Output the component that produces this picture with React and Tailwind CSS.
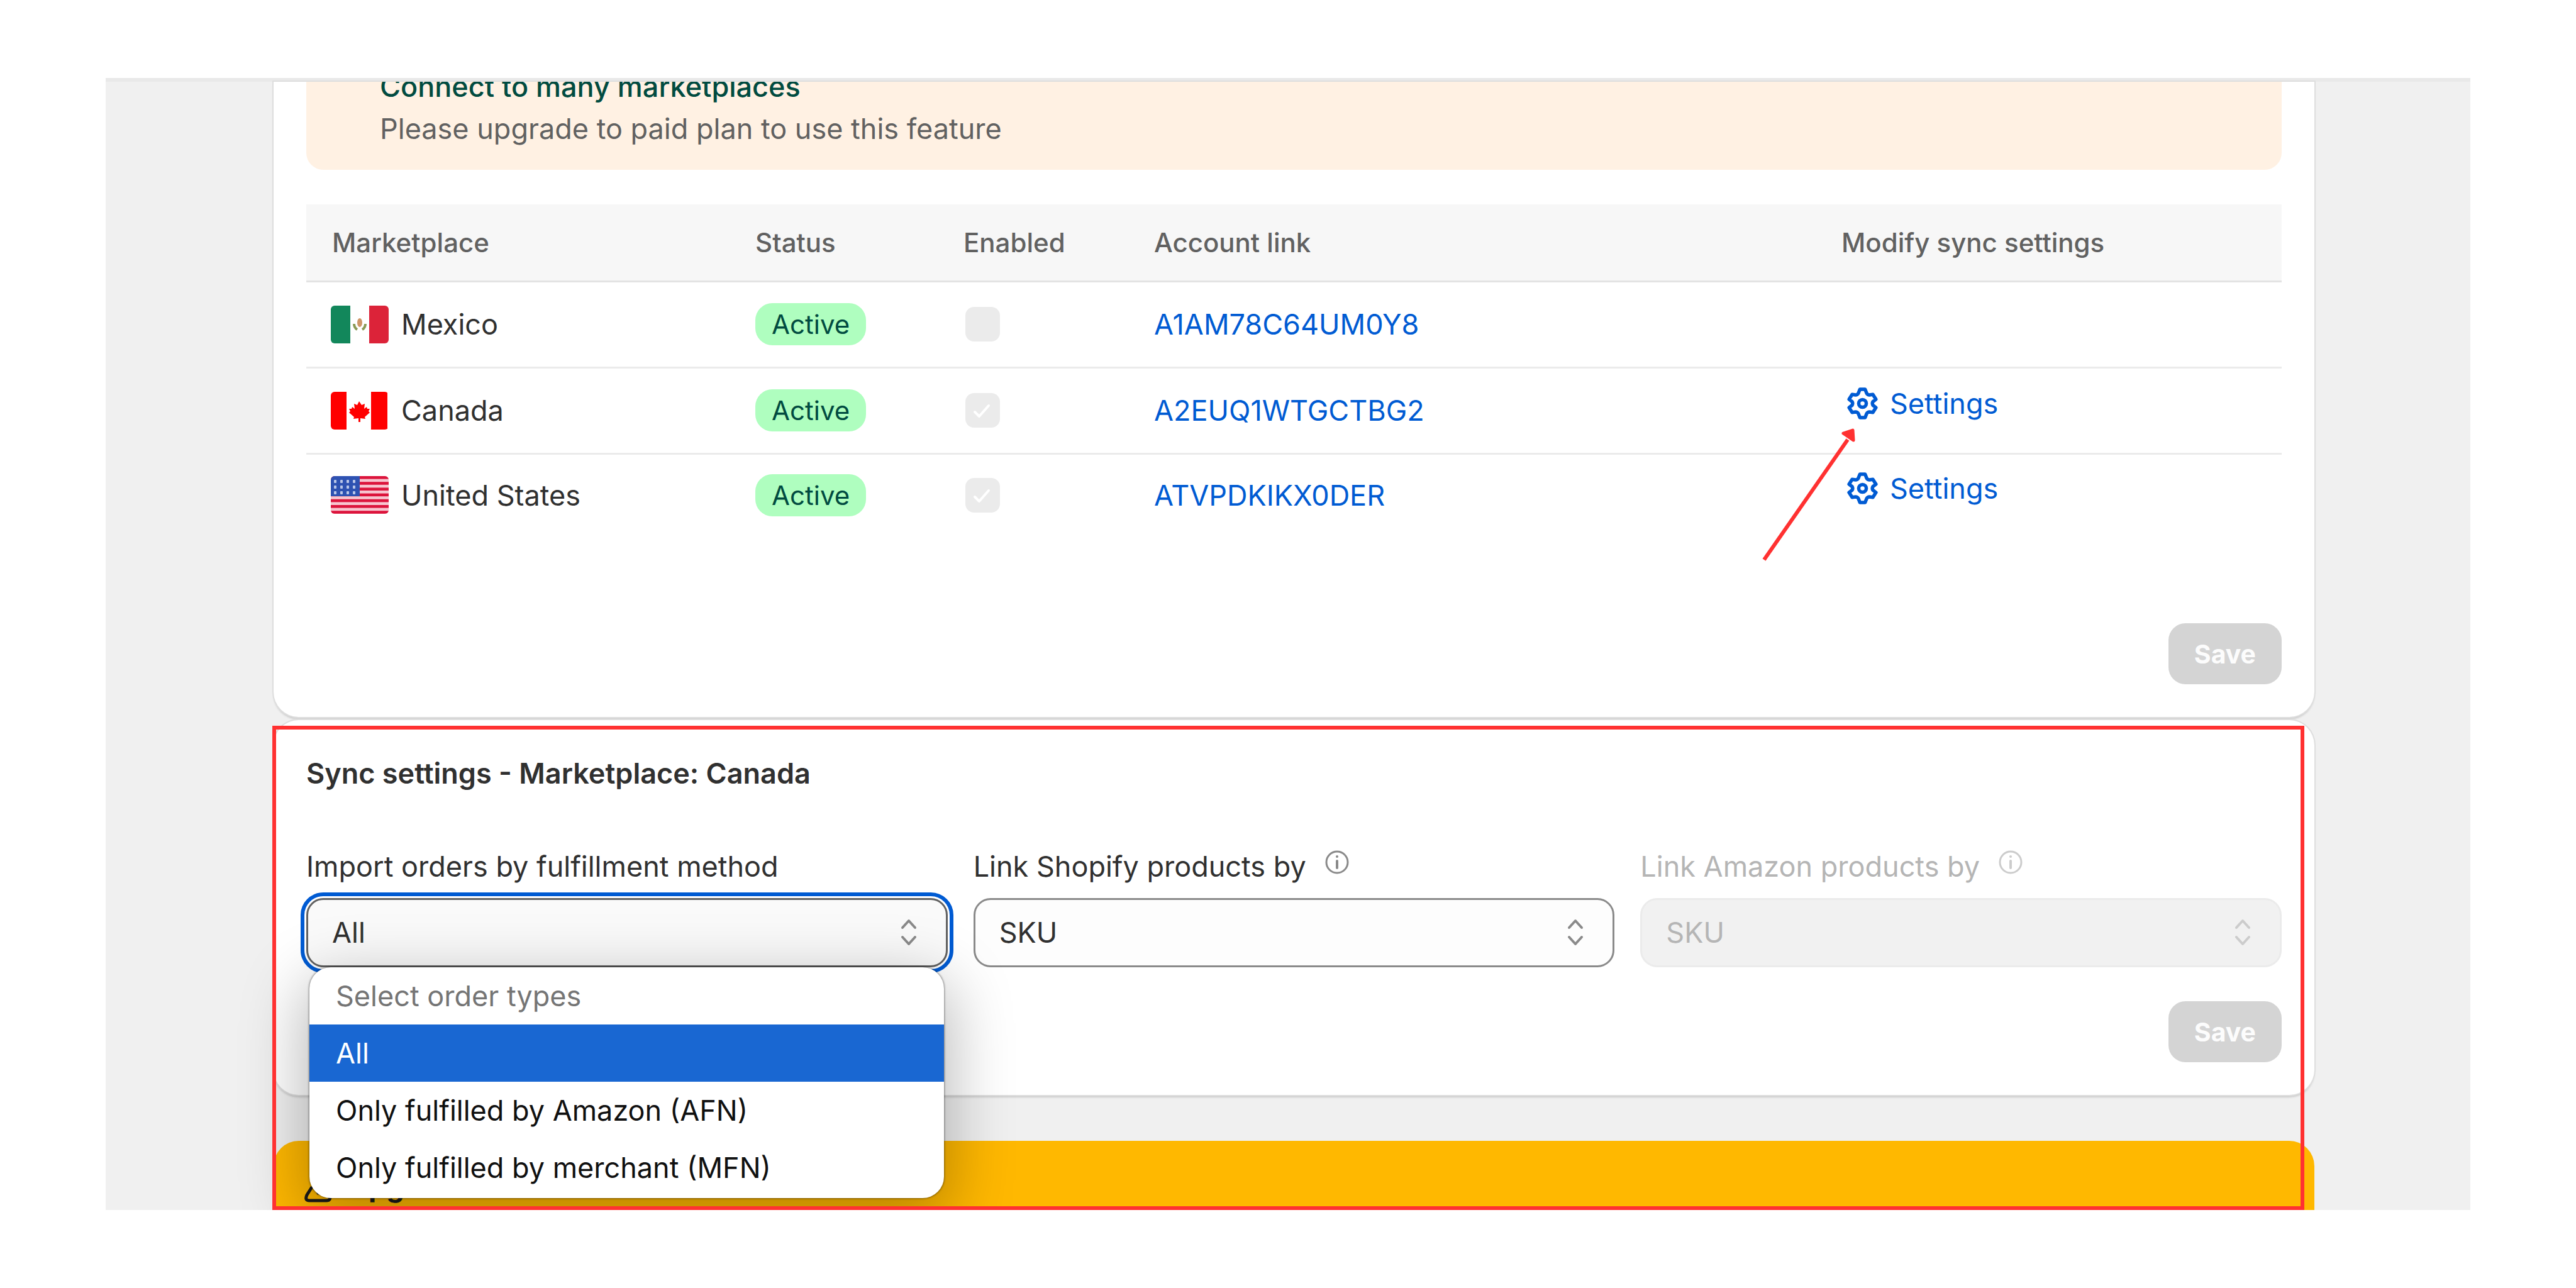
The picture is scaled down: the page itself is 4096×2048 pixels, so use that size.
import React, { useState } from 'react';

const marketplaces = [
  { name: 'Mexico', flag: MexicoFlag, enabled: false, account: 'A1AM78C64UM0Y8', settings: false },
  { name: 'Canada', flag: CanadaFlag, enabled: true, account: 'A2EUQ1WTGCTBG2', settings: true, pointer: true },
  { name: 'United States', flag: UsaFlag, enabled: true, account: 'ATVPDKIKX0DER', settings: true }
];

const orderTypes = [
  { value: '', label: 'Select order types', disabled: true },
  { value: 'all', label: 'All' },
  { value: 'afn', label: 'Only fulfilled by Amazon (AFN)' },
  { value: 'mfn', label: 'Only fulfilled by merchant (MFN)' }
];

function MexicoFlag() {
  return (
    <svg className="w-[92px] h-[60px] rounded-[6px]" viewBox="0 0 92 60" aria-hidden="true">
      <rect width="92" height="60" fill="#fff" />
      <rect width="31" height="60" fill="#12875b" />
      <rect x="61" width="31" height="60" fill="#dc2339" />
      <ellipse cx="46" cy="27" rx="4" ry="7" fill="#c98b56" opacity="0.9" />
      <path d="M37 29q0 6 5 9M55 29q0 6-5 9" fill="none" stroke="#8a9a55" strokeWidth="4" />
    </svg>
  );
}

function CanadaFlag() {
  return (
    <svg className="w-[92px] h-[60px] rounded-[6px]" viewBox="0 0 92 60" aria-hidden="true">
      <rect width="92" height="60" fill="#fff" />
      <rect width="25" height="60" fill="#f00" />
      <rect x="64" width="26" height="60" fill="#f00" />
      <path
        d="M45 15l4 6 5-2-1 8 4-3 1 3h4l-2 4 2 2-8 7 1 3-8-1v6h-3v-6l-8 1 1-3-8-7 2-2-2-4h4l1-3 4 3-1-8 5 2z"
        fill="#f00"
      />
    </svg>
  );
}

function UsaFlag() {
  const stripes = [0, 1, 2, 3, 4, 5, 6];
  const stars = [0, 1, 2, 3];
  return (
    <svg className="w-[92px] h-[60px] rounded-[6px]" viewBox="0 0 92 60" aria-hidden="true">
      <rect width="92" height="60" fill="#f7c6d0" />
      {stripes.map((i) => (
        <rect key={i} y={i * 9.2} width="92" height="4.6" fill="#dc143c" />
      ))}
      <rect width="46" height="32" fill="#2e52b2" />
      {[6, 15, 24].map((y) =>
        stars.map((i) => <rect key={`${y}-${i}`} x={5 + i * 10} y={y} width="4" height="5" rx="1" fill="#b9c6e8" />)
      )}
    </svg>
  );
}

function GearIcon() {
  return (
    <svg className="size-[67px]" viewBox="0 0 244 244" fill="none" stroke="currentColor" strokeWidth="20" strokeLinejoin="round" aria-hidden="true">
      <path d="M107 40H137L146 63Q152 73 162 73L182 70L200 98L182 112Q176 122 182 132L200 146L182 174L162 171Q152 171 146 181L137 204H107L98 181Q92 171 82 171L62 174L44 146L62 132Q68 122 62 112L44 98L62 70L82 73Q92 73 98 63Z" />
      <circle cx="122" cy="122" r="22" />
    </svg>
  );
}

function InfoIcon() {
  return (
    <svg className="size-[54px]" viewBox="0 0 54 54" fill="none" stroke="currentColor" strokeWidth="3" aria-hidden="true">
      <circle cx="27" cy="27" r="17" />
      <path d="M27 25v11" strokeWidth="4" strokeLinecap="round" />
      <circle cx="27" cy="18" r="2" fill="currentColor" stroke="none" />
    </svg>
  );
}

function SelectArrows() {
  return (
    <svg
      className="absolute right-[28px] top-[21px] size-[67px] pointer-events-none"
      viewBox="0 0 67 67"
      fill="none"
      stroke="currentColor"
      strokeWidth="4"
      strokeLinecap="round"
      strokeLinejoin="round"
      aria-hidden="true"
    >
      <path d="M23 26L33 15L43 26M23 41L33 52L43 41" />
    </svg>
  );
}

function PointerArrow() {
  return (
    <svg className="absolute left-[-128px] top-[73px] w-[152px] h-[212px] pointer-events-none" viewBox="0 0 152 212" aria-hidden="true">
      <path d="M5 209L138 18" stroke="#ff3131" strokeWidth="6" fill="none" />
      <path d="M131 8L146 3L147 19Z" fill="#ff3131" stroke="#ff3131" strokeWidth="5" strokeLinejoin="round" />
    </svg>
  );
}

function SaveButton() {
  return (
    <button
      type="button"
      disabled
      className="h-[97px] px-[41px] rounded-[27px] bg-[#d4d4d4] text-[#fcfcfc] text-[41px] leading-[54px] font-bold"
    >
      Save
    </button>
  );
}

function MarketplaceRow({ item, last }) {
  const [checked, setChecked] = useState(item.enabled);
  const Flag = item.flag;

  return (
    <tr className={last ? 'h-[131px]' : 'h-[137px] border-b-3 border-[#ebebeb]'}>
      <td className="pl-[39px]">
        <div className="flex items-center gap-[20px]">
          <Flag />
          <span>{item.name}</span>
        </div>
      </td>
      <td className="px-[20px]">
        <span className="block w-fit h-[67px] px-[26px] rounded-[27px] bg-[#affebf] text-[#014b40] text-[42px] leading-[67px]">
          Active
        </span>
      </td>
      <td className="px-[23px]">
        <div className="relative size-[55px]">
          <input
            type="checkbox"
            aria-label={`Enable ${item.name}`}
            checked={checked}
            disabled
            onChange={(e) => setChecked(e.target.checked)}
            className="block size-[55px] appearance-none rounded-[14px] bg-[#ebebeb]"
          />
          {checked && (
            <svg className="absolute inset-0 size-[55px] pointer-events-none" viewBox="0 0 55 55" fill="none" stroke="#fff" strokeWidth="4" strokeLinecap="round" strokeLinejoin="round" aria-hidden="true">
              <path d="M15 30L22 37L37 20" />
            </svg>
          )}
        </div>
      </td>
      <td className="px-[18px]">
        <a href="#account" className="text-[#005bd3]">{item.account}</a>
      </td>
      <td className="pl-[18px] pb-[22px]">
        {item.settings && (
          <a href="#settings" className="relative flex w-fit items-center gap-[10px] text-[#005bd3]">
            <GearIcon />
            <span>Settings</span>
            {item.pointer && <PointerArrow />}
          </a>
        )}
      </td>
    </tr>
  );
}

function SelectField({ id, label, info, disabled, open, children }) {
  return (
    <div className={disabled ? 'text-[#b5b5b5]' : 'text-[#303030]'}>
      <div className="flex items-start gap-[22px] mb-[17px]">
        <label htmlFor={id}>{label}</label>
        {info && (
          <span className={disabled ? 'text-[#cccccc]' : 'text-[#8a8a8a]'}>
            <InfoIcon />
          </span>
        )}
      </div>
      <div className="relative">
        <select
          id={id}
          disabled={disabled}
          className={`block w-full h-[110px] appearance-none rounded-[27px] border-3 px-[38px] pb-[2px] opacity-100 ${
            disabled
              ? 'bg-[#f1f1f1] border-[#ebebeb]'
              : open
                ? 'bg-[#fafafa] border-[#616161] outline-6 outline-offset-3 outline-[#005bd3]'
                : 'bg-[#fdfdfd] border-[#8a8a8a]'
          }`}
        >
          {open ? <option>All</option> : <option>SKU</option>}
        </select>
        <span className={disabled ? 'text-[#cccccc]' : 'text-[#8a8a8a]'}>
          <SelectArrows />
        </span>
        {children}
      </div>
    </div>
  );
}

function OrderTypeMenu({ value }) {
  return (
    <ul
      role="listbox"
      className="absolute z-10 top-[110px] left-[5px] right-[6px] pb-[3px] rounded-[34px] overflow-hidden bg-white text-[#101010] shadow-[0_0_3px_1px_rgba(0,0,0,0.4),0_30px_100px_10px_rgba(0,0,0,0.28)]"
    >
      {orderTypes.map((type) => (
        <li
          key={type.value}
          role="option"
          aria-selected={type.value === value}
          className={`px-[42px] leading-[91px] ${
            type.value === value ? 'bg-[#1967d2] text-white' : type.disabled ? 'text-[#757575]' : ''
          }`}
        >
          {type.label}
        </li>
      ))}
    </ul>
  );
}

function App() {
  return (
    <div className="min-h-screen bg-white pt-[124px] px-[168px] font-[Inter,'Liberation_Sans',sans-serif] text-[45px] leading-[67px] text-[#303030]">
      <div className="bg-[#f0f0f0] overflow-hidden">
        <div className="h-[6px] bg-[#e9e9e9]" />
        <main className="pl-[267px] pr-[248px]">
          {/* Marketplaces */}
          <section className="px-[52px] pb-[52px] rounded-b-[40px] bg-white shadow-[0_0_0_2px_#dedede,0_4px_3px_0_#cccccc]">
            <div className="overflow-hidden rounded-b-[27px] bg-[#fff1e3] px-[117px] pb-[32px]">
              <h2 className="-mt-[26px] font-medium text-[#014b40]">Connect to many marketplaces</h2>
              <p className="text-[#616161]">Please upgrade to paid plan to use this feature</p>
            </div>

            <table className="w-full mt-[55px] table-fixed text-left">
              <thead>
                <tr className="h-[122px] bg-[#f7f7f7] border-b-3 border-[#e3e3e3] text-[42px] text-[#616161]">
                  <th className="w-[694px] pl-[41px] font-medium">Marketplace</th>
                  <th className="w-[331px] px-[20px] font-medium">Status</th>
                  <th className="w-[305px] px-[20px] font-medium">Enabled</th>
                  <th className="w-[1093px] px-[18px] font-medium">Account link</th>
                  <th className="px-[18px] font-medium">Modify sync settings</th>
                </tr>
              </thead>
              <tbody>
                {marketplaces.map((item, i) => (
                  <MarketplaceRow key={item.name} item={item} last={i === marketplaces.length - 1} />
                ))}
              </tbody>
            </table>

            <div className="flex justify-end mt-[139px]">
              <SaveButton />
            </div>
          </section>

          <div className="relative mt-[5px]">
            {/* Sync settings */}
            <section className="px-[52px] pt-[51px] pb-[52px] rounded-[40px] bg-white shadow-[0_0_0_2px_#dedede,0_4px_3px_0_#cccccc]">
              <h2 className="font-semibold">Sync settings - Marketplace: Canada</h2>
              <div className="grid grid-cols-3 gap-[41px] mt-[81px]">
                <SelectField id="fulfillment" label="Import orders by fulfillment method" open>
                  <OrderTypeMenu value="all" />
                </SelectField>
                <SelectField id="shopify" label="Link Shopify products by" info />
                <SelectField id="amazon" label="Link Amazon products by" info disabled />
              </div>
              <div className="flex justify-end mt-[54px]">
                <SaveButton />
              </div>
            </section>

            {/* Upgrade */}
            <section className="flex items-start gap-[5px] mt-[73px] pl-[46px] pt-[39px] pb-[4px] rounded-t-[40px] bg-[#ffb800] text-[#1a1a1a]">
              <svg className="size-[67px]" viewBox="0 0 67 67" fill="none" stroke="currentColor" strokeWidth="5" strokeLinecap="round" strokeLinejoin="round" aria-hidden="true">
                <path d="M14 36L7 47Q3 56 11 56H38Q46 56 43 47L36 36M25 44V12M15 22L25 12L35 22" />
              </svg>
              <h2 className="font-bold">Upgrade</h2>
            </section>

            <div className="absolute z-20 -left-[2px] right-[16px] top-[9px] bottom-0 border-6 border-[#ff3131] pointer-events-none" />
          </div>
        </main>
      </div>
    </div>
  );
}

export default App;
